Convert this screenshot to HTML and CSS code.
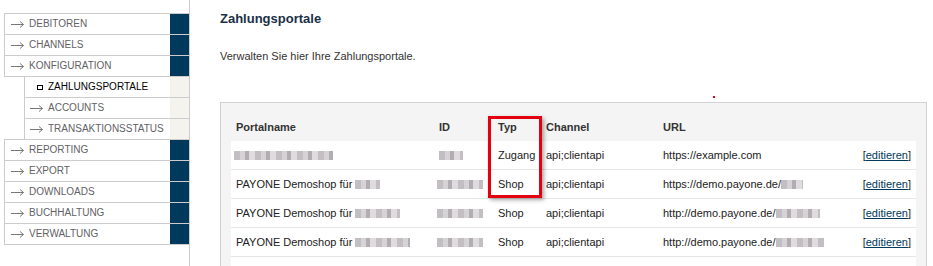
FILE: index.html
```html
<!DOCTYPE html>
<html lang="de">
<head>
    <meta charset="UTF-8">
    <meta name="viewport" content="width=device-width, initial-scale=1.0">
    <title>Zahlungsportale</title>
    <link rel="stylesheet" href="styles.css">
</head>
<body>
<div class="page">
    <aside class="sidebar">
        <ul class="menu">
            <li><a class="row" href="#"><span class="label"><svg class="arrow" viewBox="0 0 13 7"><path d="M0 3.5H12.5M9 0.5L12.5 3.5L9 6.5"/></svg>DEBITOREN</span><span class="tab"></span></a></li>
            <li><a class="row" href="#"><span class="label"><svg class="arrow" viewBox="0 0 13 7"><path d="M0 3.5H12.5M9 0.5L12.5 3.5L9 6.5"/></svg>CHANNELS</span><span class="tab"></span></a></li>
            <li>
                <a class="row" href="#"><span class="label"><svg class="arrow" viewBox="0 0 13 7"><path d="M0 3.5H12.5M9 0.5L12.5 3.5L9 6.5"/></svg>KONFIGURATION</span><span class="tab"></span></a>
                <ul class="submenu">
                    <li class="active"><a class="row" href="#"><span class="label"><span class="bullet"></span>ZAHLUNGSPORTALE</span><span class="tab"></span></a></li>
                    <li><a class="row" href="#"><span class="label"><svg class="arrow" viewBox="0 0 13 7"><path d="M0 3.5H12.5M9 0.5L12.5 3.5L9 6.5"/></svg>ACCOUNTS</span><span class="tab"></span></a></li>
                    <li><a class="row" href="#"><span class="label"><svg class="arrow" viewBox="0 0 13 7"><path d="M0 3.5H12.5M9 0.5L12.5 3.5L9 6.5"/></svg>TRANSAKTIONSSTATUS</span><span class="tab"></span></a></li>
                </ul>
            </li>
            <li><a class="row" href="#"><span class="label"><svg class="arrow" viewBox="0 0 13 7"><path d="M0 3.5H12.5M9 0.5L12.5 3.5L9 6.5"/></svg>REPORTING</span><span class="tab"></span></a></li>
            <li><a class="row" href="#"><span class="label"><svg class="arrow" viewBox="0 0 13 7"><path d="M0 3.5H12.5M9 0.5L12.5 3.5L9 6.5"/></svg>EXPORT</span><span class="tab"></span></a></li>
            <li><a class="row" href="#"><span class="label"><svg class="arrow" viewBox="0 0 13 7"><path d="M0 3.5H12.5M9 0.5L12.5 3.5L9 6.5"/></svg>DOWNLOADS</span><span class="tab"></span></a></li>
            <li><a class="row" href="#"><span class="label"><svg class="arrow" viewBox="0 0 13 7"><path d="M0 3.5H12.5M9 0.5L12.5 3.5L9 6.5"/></svg>BUCHHALTUNG</span><span class="tab"></span></a></li>
            <li><a class="row" href="#"><span class="label"><svg class="arrow" viewBox="0 0 13 7"><path d="M0 3.5H12.5M9 0.5L12.5 3.5L9 6.5"/></svg>VERWALTUNG</span><span class="tab"></span></a></li>
        </ul>
    </aside>

    <main class="content">
        <h1>Zahlungsportale</h1>
        <p class="intro">Verwalten Sie hier Ihre Zahlungsportale.</p>
        <span class="red-dot"></span>

        <div class="panel">
            <div class="table-wrap">
                <table class="portals">
                    <colgroup>
                        <col class="c-name"><col class="c-id"><col class="c-typ"><col class="c-channel"><col class="c-url"><col>
                    </colgroup>
                    <thead>
                        <tr><th>Portalname</th><th>ID</th><th>Typ</th><th>Channel</th><th>URL</th><th></th></tr>
                    </thead>
                    <tbody>
                        <tr>
                            <td><span class="blur w-name"></span></td>
                            <td><span class="blur w-id-s"></span></td>
                            <td>Zugang</td>
                            <td>api;clientapi</td>
                            <td>https://example.com</td>
                            <td class="edit">[<a href="#">editieren</a>]</td>
                        </tr>
                        <tr>
                            <td>PAYONE Demoshop für <span class="blur w-25"></span></td>
                            <td><span class="blur w-id"></span></td>
                            <td>Shop</td>
                            <td>api;clientapi</td>
                            <td>https://demo.payone.de/<span class="blur w-22"></span></td>
                            <td class="edit">[<a href="#">editieren</a>]</td>
                        </tr>
                        <tr>
                            <td>PAYONE Demoshop für <span class="blur w-45"></span></td>
                            <td><span class="blur w-id"></span></td>
                            <td>Shop</td>
                            <td>api;clientapi</td>
                            <td>http://demo.payone.de/<span class="blur w-44"></span></td>
                            <td class="edit">[<a href="#">editieren</a>]</td>
                        </tr>
                        <tr>
                            <td>PAYONE Demoshop für <span class="blur w-55"></span></td>
                            <td><span class="blur w-id"></span></td>
                            <td>Shop</td>
                            <td>api;clientapi</td>
                            <td>http://demo.payone.de/<span class="blur w-48"></span></td>
                            <td class="edit">[<a href="#">editieren</a>]</td>
                        </tr>
                        <tr>
                            <td></td><td></td><td></td><td></td><td></td><td></td>
                        </tr>
                    </tbody>
                </table>
                <!-- Markierung der Spalte Typ -->
                <div class="highlight"></div>
            </div>
        </div>
    </main>
</div>
</body>
</html>
```

FILE: styles.css
```css
html, body {
    margin: 0;
    height: 100%;
    overflow: hidden;
}
body {
    font-family: "Liberation Sans", Arial, sans-serif;
    color: #333;
    background: #fff;
}
.page {
    display: flex;
    min-height: 100vh;
}

/* Navigation */
.sidebar {
    width: 190px;
    flex: none;
    box-sizing: border-box;
    border-right: 1px solid #ccc;
    padding: 13px 0 0 4px;
}
.menu, .submenu {
    list-style: none;
    margin: 0;
    padding: 0;
}
.menu > li + li {
    margin-top: -1px;
}
.row {
    display: flex;
    height: 20px;
    border: 1px solid #ccc;
    border-right: none;
    text-decoration: none;
    color: #5f6266;
    font-size: 10px;
    line-height: 20px;
}
.label {
    flex: 1;
    display: flex;
    align-items: center;
    padding-left: 6px;
    white-space: nowrap;
}
.arrow {
    width: 13px;
    height: 7px;
    margin-right: 5px;
    fill: none;
    stroke: #777;
    stroke-width: 1;
}
.tab {
    width: 19px;
    background: #00395b;
}
.submenu {
    margin-left: 20px;
}
.submenu .row {
    border-top: none;
}
.submenu .label {
    padding-left: 5px;
}
.submenu .tab {
    background: #f4f3ee;
}
.submenu .active .row {
    color: #000;
}
.bullet {
    width: 4px;
    height: 3px;
    border: 1px solid #000;
    margin: 0 5px 0 7px;
}

/* Inhalt */
.content {
    flex: 1;
    position: relative;
    padding: 11px 6px 0 30px;
}
h1 {
    margin: 0;
    font-size: 13px;
    line-height: 15px;
    font-weight: bold;
    color: #1a3046;
}
.intro {
    margin: 24px 0 0;
    font-size: 11px;
    line-height: 13px;
    color: #333;
}
.red-dot {
    position: absolute;
    left: 523px;
    top: 96px;
    width: 2px;
    height: 2px;
    background: #e3000f;
}
.panel {
    margin-top: 39px;
    border: 1px solid #d2d2d2;
    background: #f4f4f4;
    padding: 10px;
}
.table-wrap {
    position: relative;
}
.portals {
    width: 100%;
    table-layout: fixed;
    border-collapse: collapse;
    font-size: 11px;
}
.c-name { width: 203px; }
.c-id { width: 59px; }
.c-typ { width: 48px; }
.c-channel { width: 117px; }
.c-url { width: 190px; }
.portals th {
    height: 28px;
    padding: 0 5px;
    text-align: left;
    font-weight: bold;
    color: #333;
}
.portals td {
    height: 28px;
    padding: 0 5px;
    background: #fff;
    border-bottom: 1px solid #e6e6e6;
    white-space: nowrap;
    color: #222;
}
.portals td.edit {
    text-align: right;
}
.edit a {
    color: #00395b;
}
.blur {
    display: inline-block;
    height: 9px;
    vertical-align: -1px;
    background: repeating-linear-gradient(90deg, #c2bec1 0 6px, #d6d3d6 6px 11px, #b1adb0 11px 15px, #dedcdf 15px 21px);
    filter: blur(0.7px);
}
.w-name { width: 99px; margin-left: -2px; }
.w-id-s { width: 24px; }
.w-id { width: 46px; margin-left: -2px; }
.w-22 { width: 22px; }
.w-25 { width: 25px; }
.w-44 { width: 44px; }
.w-45 { width: 45px; }
.w-48 { width: 48px; }
.w-55 { width: 55px; }
.highlight {
    position: absolute;
    left: 257px;
    top: 3px;
    width: 54px;
    height: 82px;
    box-sizing: border-box;
    border: 3px solid #e3000f;
    box-shadow: 2px 2px 4px rgba(0, 0, 0, 0.35);
}
```
